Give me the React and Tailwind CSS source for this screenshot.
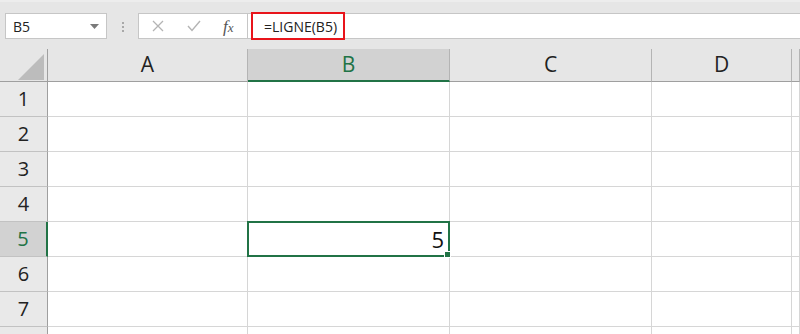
import React from "react";

const cols = ["A", "B", "C", "D", ""];
const rows = [1, 2, 3, 4, 5, 6, 7, 8];

const font = { fontFamily: '"Open Sans", "Noto Sans", sans-serif' };

const App = () => {
  return (
    <div className="w-[800px] h-[334px] overflow-hidden bg-white" style={font}>
      {/* Formula bar */}
      <div className="h-[49px] bg-[#e6e6e6] flex items-start pt-[13px] border-t-2 border-[#ededed]">
        <div className="ml-[5px] w-[102px] h-[26px] -mt-[2px] bg-white border border-[#c6c6c6] flex items-center justify-between pl-[7px] pr-[7px]">
          <span className="text-[14px] text-[#222]">B5</span>
          <svg width="9" height="5" viewBox="0 0 9 5">
            <path d="M0 0 L9 0 L4.5 5 Z" fill="#7a7a7a" />
          </svg>
        </div>
        <div className="w-[31px] h-[24px] flex flex-col items-center justify-center gap-[2px]">
          <span className="w-[2px] h-[2px] bg-[#a8a8a8]" />
          <span className="w-[2px] h-[2px] bg-[#a8a8a8]" />
          <span className="w-[2px] h-[2px] bg-[#a8a8a8]" />
        </div>
        <div className="w-[110px] h-[26px] -mt-[2px] bg-white border border-[#c6c6c6] flex items-center">
          <svg className="ml-[13px]" width="12" height="12" viewBox="0 0 12 12">
            <path d="M1 1 L11 11 M11 1 L1 11" stroke="#b4b4b4" strokeWidth="1.3" />
          </svg>
          <svg className="ml-[23px]" width="14" height="12" viewBox="0 0 14 12">
            <path d="M1 6 L5 10.5 L13 1" stroke="#b4b4b4" strokeWidth="1.4" fill="none" />
          </svg>
          <span
            className="ml-[22px] text-[17px] italic text-[#555] leading-none"
            style={{ fontFamily: '"Liberation Serif", serif' }}
          >
            f<span className="text-[13px]">x</span>
          </span>
        </div>
        <div className="flex-1 h-[26px] -mt-[2px] bg-white border-y border-[#c6c6c6] flex items-start">
          <div className="ml-[3px] -mt-[2px] w-[94px] h-[28px] border-2 border-[#e8141b] flex items-center pl-[11px]">
            <span className="text-[14px] text-[#222]">=LIGNE(B5)</span>
          </div>
        </div>
      </div>

      {/* Grid */}
      <div className="grid grid-cols-[48px_200px_202px_202px_140px_1fr]">
        {/* column headers */}
        <div className="h-[33px] bg-[#e6e6e6] border-r border-b border-[#9f9f9f] relative">
          <svg className="absolute left-[18px] top-[5px]" width="26" height="26" viewBox="0 0 26 26">
            <path d="M26 0 L26 26 L0 26 Z" fill="#bcbcbc" />
          </svg>
        </div>
        {cols.map((c) => (
          <div
            key={c || "e"}
            className={
              c === "B"
                ? "h-[33px] bg-[#d2d2d2] border-r border-r-[#b4b4b4] border-b-2 border-b-[#217346] flex items-center justify-center text-[21px] text-[#217346]"
                : "h-[33px] bg-[#e6e6e6] border-r border-r-[#b4b4b4] border-b border-b-[#9f9f9f] flex items-center justify-center text-[21px] text-[#222]"
            }
          >
            {c}
          </div>
        ))}

        {rows.map((r) => (
          <React.Fragment key={r}>
            <div
              className={
                r === 5
                  ? "h-[35px] bg-[#d2d2d2] border-r-2 border-r-[#217346] border-b border-b-[#c2c2c2] flex items-center justify-center text-[20px] text-[#217346]"
                  : "h-[35px] bg-[#e9e9e9] border-r border-r-[#9f9f9f] border-b border-b-[#c2c2c2] flex items-center justify-center text-[20px] text-[#222]"
              }
            >
              {r < 8 ? r : ""}
            </div>
            {cols.map((c) => (
              <div
                key={c || "e"}
                className="h-[35px] border-r border-b border-[#d6d6d6] relative"
              >
                {r === 5 && c === "B" && (
                  <div className="absolute -left-px -top-px -right-px -bottom-px border-2 border-[#217346] z-10 flex items-center justify-end pr-[4px]">
                    <span className="text-[22px] text-[#111] leading-none">5</span>
                    <span className="absolute -right-[3px] -bottom-[3px] w-[5px] h-[5px] bg-[#217346] border border-white box-content" />
                  </div>
                )}
              </div>
            ))}
          </React.Fragment>
        ))}
      </div>
    </div>
  );
};

export default App;
